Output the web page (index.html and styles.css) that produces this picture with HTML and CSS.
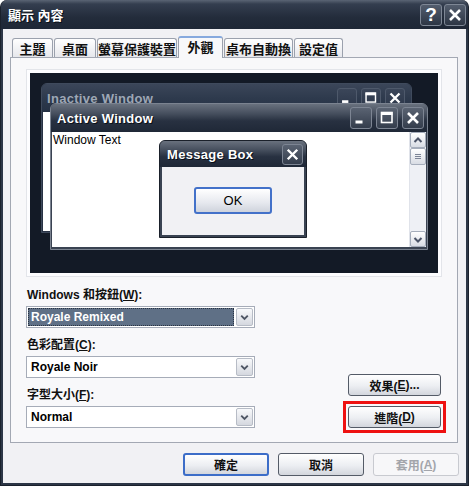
FILE: index.html
```html
<!DOCTYPE html>
<html lang="zh-Hant">
<head>
    <meta charset="UTF-8">
    <title>顯示 內容</title>
    <link rel="stylesheet" href="styles.css">
</head>
<body>

<div class="dialog">
    <div class="titlebar">
        <span class="title">顯示 內容</span>
        <div class="caption-buttons">
            <span class="cap-btn help">?</span>
            <span class="cap-btn">
                <svg width="20" height="20" viewBox="0 0 20 20"><path d="M5 5 L15 15 M15 5 L5 15" stroke="#fff" stroke-width="2.6" fill="none"/></svg>
            </span>
        </div>
    </div>

    <div class="dialog-body">
        <div class="tabs">
            <span class="tab">主題</span>
            <span class="tab">桌面</span>
            <span class="tab">螢幕保護裝置</span>
            <span class="tab selected">外觀</span>
            <span class="tab">桌布自動換</span>
            <span class="tab">設定值</span>
        </div>

        <div class="panel">
            <!-- preview of the chosen window style -->
            <div class="preview">
                <div class="win inactive">
                    <div class="win-title">
                        <span class="win-caption">Inactive Window</span>
                        <div class="win-buttons">
                            <span class="win-btn"><svg width="18" height="18" viewBox="0 0 20 20"><rect x="4.5" y="12.5" width="7" height="3" fill="#fff"/></svg></span>
                            <span class="win-btn"><svg width="18" height="18" viewBox="0 0 20 20"><rect x="4.5" y="4.5" width="10.5" height="10" stroke="#fff" stroke-width="1.6" fill="none"/><rect x="4" y="4" width="11.5" height="3" fill="#fff"/></svg></span>
                            <span class="win-btn"><svg width="18" height="18" viewBox="0 0 20 20"><path d="M5 5 L15 15 M15 5 L5 15" stroke="#fff" stroke-width="2.6" fill="none"/></svg></span>
                        </div>
                    </div>
                    <div class="win-client"></div>
                </div>

                <div class="win active">
                    <div class="win-title">
                        <span class="win-caption">Active Window</span>
                        <div class="win-buttons">
                            <span class="win-btn"><svg width="20" height="20" viewBox="0 0 20 20"><rect x="4.5" y="12.5" width="7" height="3" fill="#fff"/></svg></span>
                            <span class="win-btn"><svg width="20" height="20" viewBox="0 0 20 20"><rect x="4.5" y="4.5" width="10.5" height="10" stroke="#fff" stroke-width="1.6" fill="none"/><rect x="4" y="4" width="11.5" height="3" fill="#fff"/></svg></span>
                            <span class="win-btn"><svg width="20" height="20" viewBox="0 0 20 20"><path d="M5 5 L15 15 M15 5 L5 15" stroke="#fff" stroke-width="2.6" fill="none"/></svg></span>
                        </div>
                    </div>
                    <div class="win-client">
                        <div class="win-text">Window Text</div>
                        <div class="scrollbar">
                            <span class="sb-btn"><svg width="14" height="15" viewBox="0 0 14 15"><path d="M3.5 9 L7 5.5 L10.5 9" stroke="#4b5468" stroke-width="2" fill="none"/></svg></span>
                            <span class="sb-thumb"><svg width="14" height="15" viewBox="0 0 14 15"><path d="M4 5.5 H10 M4 7.5 H10 M4 9.5 H10" stroke="#7c8496" stroke-width="1"/></svg></span>
                            <span class="sb-track"></span>
                            <span class="sb-btn"><svg width="14" height="15" viewBox="0 0 14 15"><path d="M3.5 6 L7 9.5 L10.5 6" stroke="#4b5468" stroke-width="2" fill="none"/></svg></span>
                        </div>
                    </div>
                </div>

                <div class="win msgbox">
                    <div class="win-title">
                        <span class="win-caption">Message Box</span>
                        <div class="win-buttons">
                            <span class="win-btn"><svg width="19" height="19" viewBox="0 0 20 20"><path d="M5 5 L15 15 M15 5 L5 15" stroke="#fff" stroke-width="2.6" fill="none"/></svg></span>
                        </div>
                    </div>
                    <div class="win-client msg-body">
                        <span class="ok-btn">OK</span>
                    </div>
                </div>
            </div>

            <div class="options">
                <div class="fields">
                    <div class="field">
                        <div class="field-label">Windows 和按鈕(<u>W</u>):</div>
                        <div class="select">
                            <span class="select-value highlighted">Royale Remixed</span>
                            <span class="select-arrow"><svg width="16" height="18" viewBox="0 0 16 18"><path d="M4.5 7.5 L8 11 L11.5 7.5" stroke="#4d5563" stroke-width="2" fill="none"/></svg></span>
                        </div>
                    </div>
                    <div class="field">
                        <div class="field-label">色彩配置(<u>C</u>):</div>
                        <div class="select">
                            <span class="select-value">Royale Noir</span>
                            <span class="select-arrow"><svg width="16" height="18" viewBox="0 0 16 18"><path d="M4.5 7.5 L8 11 L11.5 7.5" stroke="#4d5563" stroke-width="2" fill="none"/></svg></span>
                        </div>
                    </div>
                    <div class="field">
                        <div class="field-label">字型大小(<u>F</u>):</div>
                        <div class="select">
                            <span class="select-value">Normal</span>
                            <span class="select-arrow"><svg width="16" height="18" viewBox="0 0 16 18"><path d="M4.5 7.5 L8 11 L11.5 7.5" stroke="#4d5563" stroke-width="2" fill="none"/></svg></span>
                        </div>
                    </div>
                </div>

                <div class="side-buttons">
                    <span class="btn">效果(<u>E</u>)...</span>
                    <span class="btn marked">進階(<u>D</u>)</span>
                </div>
            </div>
        </div>

        <div class="actions">
            <span class="btn wide default">確定</span>
            <span class="btn wide">取消</span>
            <span class="btn wide disabled">套用(<u>A</u>)</span>
        </div>
    </div>
</div>

</body>
</html>
```

FILE: styles.css
```css
body {
    margin: 0;
    background-color: #ffffff;
    font-family: 'Liberation Sans', 'Noto Sans CJK TC', sans-serif;
    font-size: 12px;
}

.dialog {
    width: 469px;
    height: 486px;
    box-sizing: border-box;
    display: flex;
    flex-direction: column;
    background-color: #2c3646;
    border-radius: 7px 7px 0 0;
    border: 1px solid #1a212c;
    border-top: none;
}

/* caption bar */
.titlebar {
    height: 29px;
    flex-shrink: 0;
    display: flex;
    align-items: center;
    justify-content: space-between;
    padding: 0 2px 0 7px;
    background: linear-gradient(#5a6474 0, #343e4f 4px, #232c3b 60%, #1e2736 100%);
    border-radius: 7px 7px 0 0;
}

.title {
    color: #ffffff;
    font-weight: bold;
    font-size: 13px;
    text-shadow: 1px 1px 0 #0b1018;
}

.caption-buttons {
    display: flex;
    gap: 2px;
}

.cap-btn {
    width: 20px;
    height: 20px;
    display: flex;
    align-items: center;
    justify-content: center;
    border: 1px solid #7e8795;
    border-radius: 3px;
    background: linear-gradient(#535d6d, #2d3645);
    color: #ffffff;
}

.cap-btn.help {
    font-size: 19px;
    font-weight: bold;
    line-height: 20px;
}

.dialog-body {
    flex: 1;
    margin: 0 2px 2px;
    background-color: #f1f1f4;
    padding: 7px 7px 0 7px;
}

/* tab strip */
.tabs {
    display: flex;
    align-items: flex-start;
    gap: 1px;
    height: 22px;
    padding-left: 2px;
    margin-bottom: -1px;
    position: relative;
    z-index: 1;
}

.tab {
    height: 19px;
    margin-top: 2px;
    box-sizing: border-box;
    display: flex;
    align-items: center;
    justify-content: center;
    font-size: 13px;
    font-weight: bold;
    color: #111111;
    background: linear-gradient(#ffffff, #e6e7ec);
    border: 1px solid #9ba1ad;
    border-bottom: none;
    border-radius: 3px 3px 0 0;
}

.tab:nth-child(1) { width: 41px; }
.tab:nth-child(2) { width: 42px; }
.tab:nth-child(3) { width: 80px; }
.tab:nth-child(4) { width: 45px; }
.tab:nth-child(5) { width: 69px; }
.tab:nth-child(6) { width: 49px; }

.tab.selected {
    height: 22px;
    margin-top: 0;
    background: #f8f8fa;
    border-top: 2px solid #86a9de;
    padding-bottom: 3px;
}

.panel {
    width: 448px;
    height: 386px;
    box-sizing: border-box;
    background-color: #f8f8fa;
    border: 1px solid #a3a8b3;
}

/* preview canvas */
.preview {
    position: relative;
    width: 408px;
    height: 200px;
    margin: 15px 0 0 19px;
    background-color: #131a26;
    box-shadow: 0 0 0 3px #fdfdff, 0 0 0 4px #e3e5ea;
    overflow: hidden;
}

.win {
    position: absolute;
    display: flex;
    flex-direction: column;
    box-sizing: border-box;
    border: 1px solid #5d6676;
    border-radius: 6px 6px 0 0;
    background-color: #3a4352;
}

.win.inactive {
    left: 11px;
    top: 10px;
    width: 371px;
    height: 150px;
    border-color: #3f4a5c;
    background-color: #283244;
}

.win.active {
    left: 20px;
    top: 30px;
    width: 378px;
    height: 147px;
    border-color: #7b8390;
}

.win.msgbox {
    left: 129px;
    top: 67px;
    width: 148px;
    height: 98px;
    border-color: #1a202a;
}

.win-title {
    height: 28px;
    flex-shrink: 0;
    display: flex;
    align-items: center;
    justify-content: space-between;
    padding: 0 3px 0 6px;
    border-radius: 5px 5px 0 0;
    background: linear-gradient(#69717e 0, #454e5d 35%, #283141 60%, #1f2837 100%);
}

.inactive .win-title {
    background: linear-gradient(#3b4659 0, #2e3a4d 50%, #253144 100%);
    padding: 0 6px 0 5px;
}

.msgbox .win-title {
    height: 26px;
    padding: 0 3px 0 7px;
}

.win-caption {
    font-size: 13px;
    font-weight: bold;
    color: #ffffff;
    text-shadow: 1px 1px 0 #0a0f18;
    letter-spacing: 0.3px;
}

.inactive .win-caption {
    color: #9ea7b5;
    text-shadow: none;
}

.win-buttons {
    display: flex;
    gap: 4px;
}

.win-btn {
    display: flex;
    border: 1px solid #7d8593;
    border-radius: 3px;
    background: linear-gradient(#5a6372, #343d4c);
}

.inactive .win-btn {
    border-color: #4e596b;
    background: linear-gradient(#3b4659, #2c374a);
}

.win-client {
    flex: 1;
    display: flex;
    margin: 0 1px 2px;
    background-color: #ffffff;
}

.inactive .win-client {
    margin: 0 1px 1px;
}

.win-text {
    flex: 1;
    padding: 1px 0 0 1px;
    font-size: 12px;
    color: #000000;
}

.scrollbar {
    width: 16px;
    display: flex;
    flex-direction: column;
    background-color: #eef0f5;
    border-left: 1px solid #e0e3ea;
}

.sb-btn,
.sb-thumb {
    height: 16px;
    display: flex;
    align-items: center;
    justify-content: center;
    box-sizing: border-box;
    border: 1px solid #a5adbb;
    border-radius: 2px;
    background: linear-gradient(#ffffff, #d8dce4);
}

.sb-thumb {
    height: 17px;
}

.sb-track {
    flex: 1;
}

.msg-body {
    margin: 0 2px 2px;
    background-color: #f1f1f4;
    justify-content: center;
    align-items: flex-start;
    padding-top: 20px;
    box-sizing: border-box;
}

.ok-btn {
    width: 78px;
    height: 27px;
    box-sizing: border-box;
    display: flex;
    align-items: center;
    justify-content: center;
    font-size: 13px;
    color: #000000;
    border: 2px solid #4371c9;
    border-radius: 3px;
    background: linear-gradient(#ffffff, #e6e8ee 60%, #cfd3dc);
}

/* lower controls */
.options {
    display: flex;
    justify-content: space-between;
    align-items: flex-end;
    margin-top: 14px;
    padding: 0 16px 0 15px;
}

.fields {
    width: 229px;
    display: flex;
    flex-direction: column;
    gap: 9px;
}

.field-label {
    height: 16px;
    line-height: 16px;
    margin: 0 0 3px 1px;
    font-weight: bold;
    color: #111111;
}

.select {
    height: 22px;
    box-sizing: border-box;
    display: flex;
    border: 1px solid #a6acb8;
    background-color: #ffffff;
}

.select-value {
    flex: 1;
    display: flex;
    align-items: center;
    margin: 1px;
    padding-left: 3px;
    font-weight: bold;
    color: #000000;
}

.select-value.highlighted {
    background-color: #5f7086;
    color: #ffffff;
    outline: 1px dotted #2a3342;
    outline-offset: -1px;
}

.select-arrow {
    width: 17px;
    display: flex;
    align-items: center;
    justify-content: center;
    margin: 1px;
    box-sizing: border-box;
    border: 1px solid #b7bcc6;
    border-radius: 2px;
    background: linear-gradient(#f8f9fb, #d5d8df);
}

.side-buttons {
    display: flex;
    flex-direction: column;
    gap: 10px;
}

.btn {
    width: 93px;
    height: 22px;
    box-sizing: border-box;
    display: flex;
    align-items: center;
    justify-content: center;
    font-weight: bold;
    color: #111111;
    border: 1px solid #545b67;
    border-radius: 3px;
    background: linear-gradient(#ffffff, #eceef2 55%, #d3d6dd);
}

/* red square drawn around the advanced button */
.btn.marked {
    position: relative;
}

.btn.marked::after {
    content: '';
    position: absolute;
    top: -6px;
    bottom: -6px;
    left: -6px;
    right: -6px;
    border: 3px solid #ee1111;
}

.actions {
    display: flex;
    justify-content: flex-end;
    gap: 9px;
    margin-top: 10px;
}

.btn.wide {
    width: 86px;
    height: 23px;
}

.btn.default {
    border: 2px solid #3c6dc8;
}

.btn.disabled {
    color: #a3a5ab;
    border-color: #c8cad0;
    background: #f7f7f9;
}
```
